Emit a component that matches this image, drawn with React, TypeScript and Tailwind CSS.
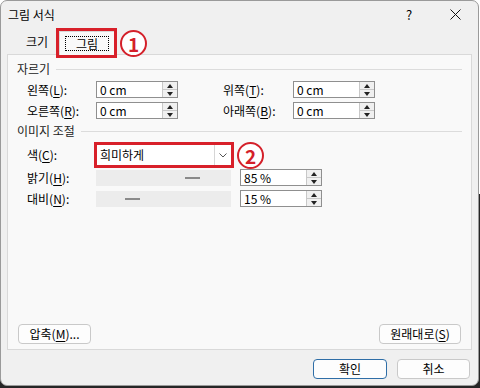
import React from 'react'

const font = { fontFamily: '"Noto Sans CJK KR", "Noto Sans", sans-serif' }

function U({ children }: { children: React.ReactNode }) {
  return <span className="underline underline-offset-[2px]">{children}</span>
}

function Spinner() {
  return (
    <div className="flex h-full w-[15px] flex-col border-l border-[#c8c8c8] bg-[#f0f0f0]">
      <div className="flex flex-1 items-center justify-center border-b border-[#c8c8c8]">
        <div className="h-0 w-0 border-x-[3px] border-b-[4px] border-x-transparent border-b-[#222]" />
      </div>
      <div className="flex flex-1 items-center justify-center">
        <div className="h-0 w-0 border-x-[3px] border-t-[4px] border-x-transparent border-t-[#222]" />
      </div>
    </div>
  )
}

function SpinBox({ value }: { value: string }) {
  return (
    <div className="flex h-[17px] w-[82px] items-stretch border border-[#8f8f8f] bg-white">
      <span className="flex-1 pl-[3px] text-[12px] leading-[15px] text-black">{value}</span>
      <Spinner />
    </div>
  )
}

function Field({ label, value, labelW }: { label: React.ReactNode; value: string; labelW: string }) {
  return (
    <div className="flex h-[17px] items-center">
      <span className={`${labelW} text-[12px] text-black`}>{label}</span>
      <SpinBox value={value} />
    </div>
  )
}

function SectionLabel({ text }: { text: string }) {
  return (
    <div className="flex h-[16px] items-center gap-[6px]">
      <span className="text-[12px] leading-[16px] text-[#222]">{text}</span>
      <div className="h-px flex-1 bg-[#dcdcdc]" />
    </div>
  )
}

function Circled({ n }: { n: string }) {
  return (
    <div className="flex h-[27px] w-[27px] items-center justify-center rounded-full border-[2.5px] border-[#d4202a] bg-white">
      <span className="text-[19px] font-bold leading-none text-[#d4202a]">{n}</span>
    </div>
  )
}

function Button({ children, w, primary }: { children: React.ReactNode; w: string; primary?: boolean }) {
  return (
    <div
      className={`flex h-[20px] ${w} items-center justify-center rounded-[4px] border bg-[#fdfdfd] text-[12px] text-black ${
        primary ? 'border-[#2f6ea7]' : 'border-[#c9c9c9]'
      }`}
    >
      {children}
    </div>
  )
}

export default function App() {
  return (
    <div
      className="h-[388px] w-[480px] overflow-hidden bg-linear-to-b from-white from-50% to-[#262626] to-50%"
      style={font}
    >
      <div className="flex h-[386px] w-[479px] flex-col rounded-[7px] border border-[#9a9a9a] bg-[#f0f0f0]">
        {/* title bar */}
        <div className="flex h-[27px] items-center">
          <span className="pl-[7px] text-[12px] text-black">그림 서식</span>
          <span className="ml-auto w-[14px] text-[13px] text-black">?</span>
          <svg className="ml-[30px] mr-[17px]" width="11" height="11" viewBox="0 0 11 11">
            <path d="M0.5 0.5L10.5 10.5M10.5 0.5L0.5 10.5" stroke="#111" strokeWidth="1" />
          </svg>
        </div>

        {/* tabs */}
        <div className="relative z-10 flex h-[26px] items-end pl-[14px]">
          <div className="mb-[3px] flex h-[18px] w-[44px] items-center justify-center text-[12px] text-black">
            크기
          </div>
          <div className="relative -mb-px flex h-[24px] w-[56px] items-center justify-center border border-b-0 border-[#d9d9d9] bg-[#f9f9f9]">
            <div className="flex h-[15px] w-[44px] items-center justify-center border border-dotted border-black text-[12px] text-black">
              그림
            </div>
            <div className="absolute -left-[4px] -top-[4px] h-[30px] w-[61px] border-[3px] border-[#d8202a]" />
          </div>
          <div className="mb-[-5px] ml-[5px] self-center">
            <Circled n="1" />
          </div>
        </div>

        {/* panel */}
        <div className="mx-[6px] flex h-[296px] flex-col border border-[#d9d9d9] bg-[#f9f9f9] px-[9px] pt-[6px]">
          <SectionLabel text="자르기" />
          <div className="mt-[4px] flex flex-col gap-[4px] pl-[10px]">
            <div className="flex">
              <Field label={<>왼쪽(<U>L</U>):</>} value="0 cm" labelW="w-[69px]" />
              <div className="ml-[45px]">
                <Field label={<>위쪽(<U>T</U>):</>} value="0 cm" labelW="w-[70px]" />
              </div>
            </div>
            <div className="flex">
              <Field label={<>오른쪽(<U>R</U>):</>} value="0 cm" labelW="w-[69px]" />
              <div className="ml-[45px]">
                <Field label={<>아래쪽(<U>B</U>):</>} value="0 cm" labelW="w-[70px]" />
              </div>
            </div>
          </div>

          <div className="mt-[4px]">
            <SectionLabel text="이미지 조절" />
          </div>

          <div className="mt-[5px] flex h-[22px] items-center pl-[10px]">
            <span className="w-[69px] text-[12px] text-black">
              색(<U>C</U>):
            </span>
            <div className="relative flex h-[22px] w-[136px] items-center border border-[#bdbdbd] bg-white">
              <span className="flex-1 pl-[3px] text-[12px] text-black">희미하게</span>
              <div className="flex h-full w-[17px] items-center justify-center border-l border-[#d6d6d6]">
                <svg width="8" height="5" viewBox="0 0 8 5">
                  <path d="M0.5 0.5L4 4L7.5 0.5" fill="none" stroke="#555" strokeWidth="1" />
                </svg>
              </div>
              <div className="absolute -left-[3px] -top-[3px] h-[26px] w-[140px] border-[3px] border-[#d8202a]" />
            </div>
            <div className="ml-[5px]">
              <Circled n="2" />
            </div>
          </div>

          <div className="mt-[3px] flex flex-col gap-[4px] pl-[10px]">
            <div className="flex h-[17px] items-center">
              <span className="w-[69px] text-[12px] text-black">
                밝기(<U>H</U>):
              </span>
              <div className="flex h-[16px] w-[135px] items-center bg-[#ececec] pl-[89px]">
                <div className="h-[2px] w-[15px] bg-[#8a8a8a]" />
              </div>
              <div className="ml-[9px]">
                <SpinBox value="85 %" />
              </div>
            </div>
            <div className="flex h-[17px] items-center">
              <span className="w-[69px] text-[12px] text-black">
                대비(<U>N</U>):
              </span>
              <div className="flex h-[16px] w-[135px] items-center bg-[#ececec] pl-[29px]">
                <div className="h-[2px] w-[15px] bg-[#8a8a8a]" />
              </div>
              <div className="ml-[9px]">
                <SpinBox value="15 %" />
              </div>
            </div>
          </div>

          <div className="mt-auto mb-[5px] flex items-center justify-between pl-[1px] pr-[1px]">
            <Button w="w-[73px]">
              압축(<U>M</U>)...
            </Button>
            <Button w="w-[82px]">
              원래대로(<U>S</U>)
            </Button>
          </div>
        </div>

        {/* footer */}
        <div className="mt-[9px] flex justify-end gap-[10px] pr-[8px]">
          <Button w="w-[74px]" primary>
            확인
          </Button>
          <Button w="w-[73px]">취소</Button>
        </div>
      </div>
    </div>
  )
}
